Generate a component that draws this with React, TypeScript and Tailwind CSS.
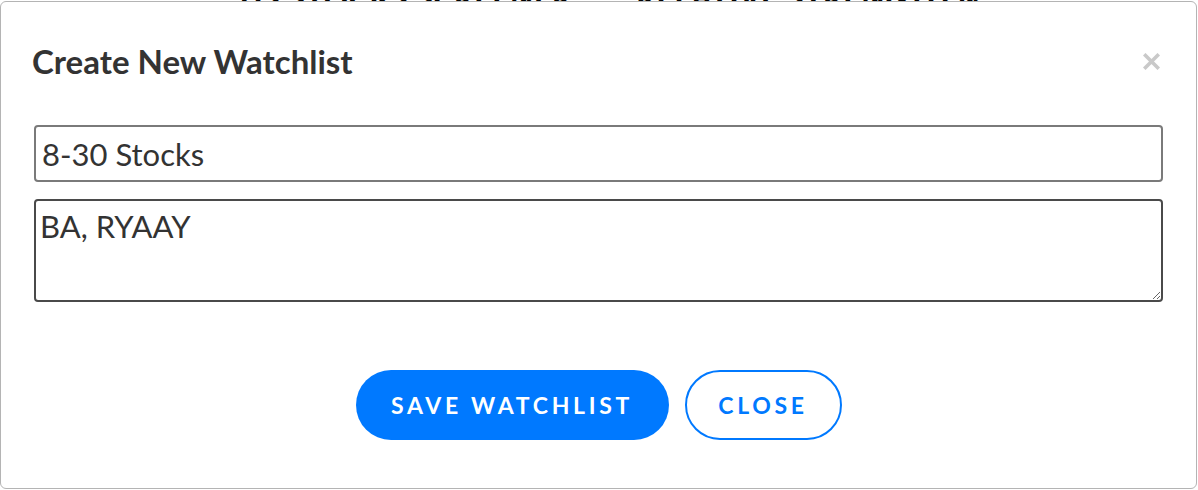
import React, { useState } from 'react';

const font = { fontFamily: 'Lato, "Liberation Sans", sans-serif' };

export default function App() {
  const [name, setName] = useState('8-30 Stocks');
  const [symbols, setSymbols] = useState('BA, RYAAY');

  return (
    <div className="relative h-[490px] w-full overflow-hidden bg-white" style={font}>
      {/* page behind the dialog, only its heading peeks out at the top */}
      <div className="absolute left-[240px] top-[-25px] flex gap-16 whitespace-nowrap text-[30px] font-black uppercase tracking-wide text-black">
        <span>US Stocks Screener</span>
        <span>Relative Strength &amp;</span>
      </div>

      {/* dialog */}
      <div className="absolute left-0 top-[1px] flex h-[488px] w-[1197px] flex-col rounded-md border border-[#b4b4b4] bg-white">
        {/* header */}
        <div className="flex items-center justify-between pl-[31px] pr-[35px] pt-[36px]">
          <h2 className="text-[33px] font-bold leading-[46px] text-[#333333]">Create New Watchlist</h2>
          <button className="flex h-5 w-5 items-center justify-center">
            <svg width="17" height="17" viewBox="0 0 17 17">
              <path d="M2.5 2.5L14.5 14.5M14.5 2.5L2.5 14.5" stroke="#c9c9c9" strokeWidth="3.6" strokeLinecap="square" />
            </svg>
          </button>
        </div>

        {/* body */}
        <div className="mt-[41px] flex flex-col gap-[17px] px-[33px]">
          <input
            value={name}
            onChange={(e) => setName(e.target.value)}
            className="h-[57px] w-full rounded-[4px] border-2 border-[#7a7a7a] px-[6px] text-[31px] text-[#333333] outline-none"
          />
          <textarea
            value={symbols}
            onChange={(e) => setSymbols(e.target.value)}
            className="h-[103px] w-full resize-y rounded-[4px] border-2 border-[#4a4a4a] px-[4px] pt-[6px] text-[31px] leading-[38px] text-[#333333] outline-none"
          />
        </div>

        {/* footer */}
        <div className="mt-[68px] flex justify-center gap-4">
          <button className="h-[70px] w-[313px] rounded-full bg-[#0079ff] text-[23px] font-bold uppercase tracking-[0.16em] text-white">
            Save Watchlist
          </button>
          <button className="h-[70px] w-[157px] rounded-full border-2 border-[#0079ff] bg-white text-[23px] font-bold uppercase tracking-[0.16em] text-[#0079ff]">
            Close
          </button>
        </div>
      </div>
    </div>
  );
}
